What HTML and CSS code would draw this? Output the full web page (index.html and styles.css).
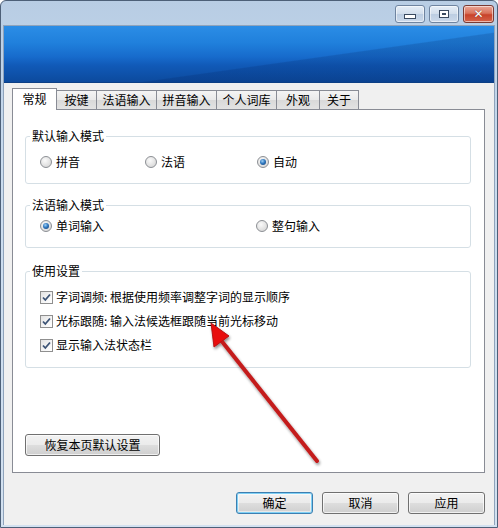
FILE: index.html
```html
<!DOCTYPE html>
<html lang="zh">
<head>
<meta charset="utf-8">
<link rel="stylesheet" href="styles.css">
</head>
<body>
<div class="window">
  <div class="titlebar">
    <div class="caption-btn minb"><span class="min-glyph"></span></div>
    <div class="caption-btn maxb"><span class="max-glyph"></span></div>
    <div class="caption-btn closeb"><span class="x-glyph">✕</span></div>
  </div>
  <div class="client">
    <div class="banner"></div>
    <div class="content">
      <div class="tabs">
        <div class="tab active">常规</div>
        <div class="tab w2a">按键</div>
        <div class="tab w4">法语输入</div>
        <div class="tab w4">拼音输入</div>
        <div class="tab w4">个人词库</div>
        <div class="tab w2b">外观</div>
        <div class="tab w2c">关于</div>
      </div>
      <div class="panel">
        <div class="group g1">
          <div class="gtitle">默认输入模式</div>
          <div class="row radios r1">
            <label class="opt o105"><span class="radio"></span>拼音</label>
            <label class="opt o112"><span class="radio"></span>法语</label>
            <label class="opt"><span class="radio on"></span>自动</label>
          </div>
        </div>
        <div class="group g2">
          <div class="gtitle">法语输入模式</div>
          <div class="row radios r2">
            <label class="opt o216"><span class="radio on"></span>单词输入</label>
            <label class="opt"><span class="radio"></span>整句输入</label>
          </div>
        </div>
        <div class="group g3">
          <div class="gtitle">使用设置</div>
          <div class="checks">
            <label class="opt"><span class="check"><svg width="11" height="11" viewBox="0 0 11 11"><path d="M2 5.5 L4.3 8 L9 2.5" fill="none" stroke="#3c5375" stroke-width="1.8"/></svg></span>字词调频: 根据使用频率调整字词的显示顺序</label>
            <label class="opt"><span class="check"><svg width="11" height="11" viewBox="0 0 11 11"><path d="M2 5.5 L4.3 8 L9 2.5" fill="none" stroke="#3c5375" stroke-width="1.8"/></svg></span>光标跟随: 输入法候选框跟随当前光标移动</label>
            <label class="opt"><span class="check"><svg width="11" height="11" viewBox="0 0 11 11"><path d="M2 5.5 L4.3 8 L9 2.5" fill="none" stroke="#3c5375" stroke-width="1.8"/></svg></span>显示输入法状态栏</label>
          </div>
        </div>
        <div class="btn restore">恢复本页默认设置</div>
      </div>
      <div class="footer">
        <div class="btn fbtn default">确定</div>
        <div class="btn fbtn">取消</div>
        <div class="btn fbtn">应用</div>
      </div>
    </div>
  </div>
  <svg class="arrow" width="498" height="528" viewBox="0 0 498 528">
    <defs>
      <filter id="sh" x="-20%" y="-20%" width="140%" height="140%">
        <feGaussianBlur in="SourceAlpha" stdDeviation="1.5" result="bl"/>
        <feOffset in="bl" dx="1" dy="1.5" result="b"/>
        <feComponentTransfer in="b" result="c"><feFuncA type="linear" slope="0.45"/></feComponentTransfer>
        <feMerge><feMergeNode in="c"/><feMergeNode in="SourceGraphic"/></feMerge>
      </filter>
    </defs>
    <g filter="url(#sh)">
      <line x1="317" y1="461" x2="220" y2="339" stroke="#c41e1e" stroke-width="4" stroke-linecap="round"/>
      <polygon points="211,323 229,336 214,347" fill="#e80e0e" stroke="#b71414" stroke-width="1"/>
    </g>
  </svg>
</div>
</body>
</html>
```
FILE: styles.css
```css
* { box-sizing: border-box; }
html, body { margin: 0; padding: 0; background: #fff; }
body {
  font-family: "Noto Sans CJK SC", "Noto Sans", sans-serif;
  font-size: 12px;
  color: #000;
}
.window {
  position: relative;
  width: 498px;
  height: 528px;
  border: 1px solid #4d6078;
  border-radius: 6px 6px 0 0;
  background: linear-gradient(180deg, #b8cde4 0%, #c9dbee 30%, #d3e1f0 100%);
  padding: 0 2px 2px 2px;
  display: flex;
  flex-direction: column;
  overflow: hidden;
}
.titlebar {
  height: 24px;
  display: flex;
  justify-content: flex-end;
  align-items: flex-start;
  padding-top: 4px;
  padding-right: 1px;
  gap: 4px;
}
.caption-btn {
  height: 18px;
  border: 1px solid #6f84a0;
  border-radius: 3px;
  display: flex;
  align-items: center;
  justify-content: center;
  box-shadow: inset 0 0 0 1px rgba(255,255,255,0.55);
}
.minb, .maxb {
  width: 30px;
  background: linear-gradient(180deg, #e6eef7 0%, #d2deec 48%, #bccde2 52%, #cbd9ea 100%);
}
.closeb {
  width: 31px;
  border-color: #7a3a33;
  background: linear-gradient(180deg, #eba797 0%, #d9735c 45%, #c8422a 55%, #d5644a 100%);
}
.min-glyph {
  width: 12px;
  height: 5px;
  margin-top: 5px;
  border: 1px solid #3a4a60;
  background: #fff;
}
.max-glyph {
  width: 10px;
  height: 8px;
  border: 1px solid #3a4a60;
  background: #fff;
  box-shadow: inset 0 0 0 2px #fff, inset 0 0 0 3px #3a4a60;
}
.x-glyph {
  color: #fff;
  font-family: "DejaVu Sans", sans-serif;
  font-size: 12px;
  font-weight: bold;
  line-height: 1;
  text-shadow: 0 0 1px #5a1a10;
}
.client {
  flex: 1;
  display: flex;
  flex-direction: column;
  border: 1px solid #8fa3bb;
  border-bottom: none;
}
.banner {
  height: 56px;
  background:
    linear-gradient(172deg, rgba(255,255,255,0) 60%, rgba(0,30,90,0.18) 61%),
    linear-gradient(180deg, #2b8de6 0%, #2080dc 30%, #176bcc 55%, #115ab8 70%, #0c4a9d 100%);
}
.content {
  flex: 1;
  background: #f0f0f0;
  display: flex;
  flex-direction: column;
  border-top: 1px solid #0c3f85;
}
.tabs {
  display: flex;
  align-items: flex-end;
  height: 21px;
  margin-top: 5px;
  padding-left: 8px;
}
.tab {
  height: 19px;
  line-height: 18px;
  border: 1px solid #898c95;
  border-bottom: none;
  border-left: none;
  background: linear-gradient(180deg, #f4f4f4 0%, #e9e9e9 50%, #d9d9d9 51%, #e3e3e3 100%);
  text-align: center;
  white-space: nowrap;
}
.tab.active {
  width: 45px;
  height: 22px;
  line-height: 20px;
  margin-bottom: -1px;
  background: #fff;
  border-left: 1px solid #898c95;
  position: relative;
  z-index: 1;
}
.w2a { width: 40px; }
.w4 { width: 60px; }
.w2b { width: 43px; }
.w2c { width: 39px; }
.panel {
  height: 364px;
  margin: 0 9px 0 8px;
  border: 1px solid #898c95;
  background: #fff;
  padding: 0 13px 0 12px;
  display: flex;
  flex-direction: column;
}
.group {
  border: 1px solid #d5dfe5;
  border-radius: 3px;
  display: flex;
  flex-direction: column;
}
.g1 { margin-top: 26px; height: 48px; }
.g2 { margin-top: 21px; height: 43px; }
.g3 { margin-top: 23px; height: 97px; }
.gtitle {
  margin-top: -8px;
  margin-left: 4px;
  padding: 0 2px;
  height: 14px;
  line-height: 14px;
  background: #fff;
  align-self: flex-start;
}
.row {
  display: flex;
  padding-left: 14px;
}
.r1 { margin-top: 11px; }
.r2 { margin-top: 6px; }
.opt {
  display: flex;
  align-items: center;
  height: 16px;
  line-height: 16px;
  white-space: nowrap;
}
.o105 { width: 105px; }
.o112 { width: 112px; }
.o216 { width: 216px; }
.radio {
  width: 12px;
  height: 12px;
  border-radius: 50%;
  border: 1px solid #8c8f94;
  background: radial-gradient(circle at 40% 35%, #fafafa 0%, #e3e3e3 55%, #cfcfcf 100%);
  margin-right: 4px;
  display: flex;
  align-items: center;
  justify-content: center;
}
.radio.on::after {
  content: "";
  width: 6px;
  height: 6px;
  border-radius: 50%;
  background: radial-gradient(circle at 40% 35%, #9fd0f5 0%, #2f78c0 45%, #14386a 100%);
}
.checks {
  display: flex;
  flex-direction: column;
  gap: 8px;
  margin-top: 11px;
  padding-left: 14px;
}
.check {
  width: 13px;
  height: 13px;
  border: 1px solid #8f8f8f;
  background: linear-gradient(135deg, #e2e2e2 0%, #f6f6f6 60%, #fff 100%);
  margin-right: 3px;
  display: flex;
  align-items: center;
  justify-content: center;
}
.check svg { display: block; }
.btn {
  height: 22px;
  line-height: 20px;
  border: 1px solid #707070;
  border-radius: 3px;
  background: linear-gradient(180deg, #f2f2f2 0%, #ebebeb 48%, #dddddd 52%, #cfcfcf 100%);
  box-shadow: inset 0 0 0 1px rgba(255,255,255,0.7);
  text-align: center;
  white-space: nowrap;
}
.restore {
  width: 135px;
  margin-top: 66px;
}
.footer {
  display: flex;
  justify-content: flex-end;
  gap: 9px;
  margin-top: 19px;
  padding-right: 9px;
}
.fbtn { width: 77px; }
.fbtn.default {
  border-color: #3c7fb1;
  box-shadow: inset 0 0 0 1px #7fd0f5, inset 0 0 0 2px rgba(255,255,255,0.5);
}
.arrow {
  position: absolute;
  left: -1px;
  top: -1px;
  pointer-events: none;
}
```
